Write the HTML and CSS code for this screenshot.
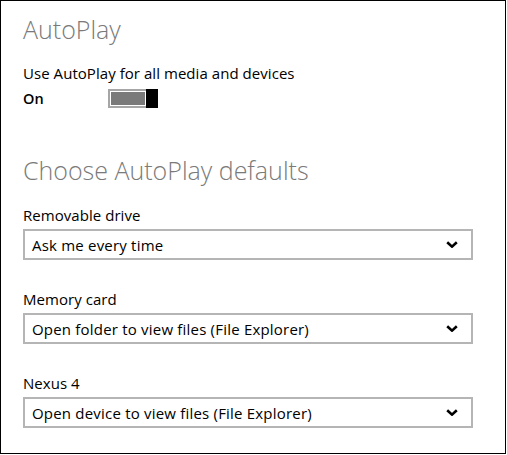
FILE: index.html
```html
<!DOCTYPE html>
<html lang="en">
<head>
<meta charset="utf-8">
<title>AutoPlay</title>
<link rel="stylesheet" href="styles.css">
</head>
<body>
<div class="frame">
  <h1 class="heading">AutoPlay</h1>
  <div class="label">Use AutoPlay for all media and devices</div>
  <div class="toggle-row">
    <span class="state">On</span>
    <span class="toggle"><span class="track"></span><span class="thumb"></span></span>
  </div>

  <h2 class="heading heading-second">Choose AutoPlay defaults</h2>

  <div class="field">
    <div class="label">Removable drive</div>
    <div class="select">
      <span class="select-text">Ask me every time</span>
      <svg class="chevron" width="12" height="7" viewBox="0 0 12 7"><polyline points="1.2,1.2 6,5.6 10.8,1.2" fill="none" stroke="#000" stroke-width="2.6"/></svg>
    </div>
  </div>

  <div class="field">
    <div class="label">Memory card</div>
    <div class="select">
      <span class="select-text">Open folder to view files (File Explorer)</span>
      <svg class="chevron" width="12" height="7" viewBox="0 0 12 7"><polyline points="1.2,1.2 6,5.6 10.8,1.2" fill="none" stroke="#000" stroke-width="2.6"/></svg>
    </div>
  </div>

  <div class="field">
    <div class="label">Nexus 4</div>
    <div class="select">
      <span class="select-text">Open device to view files (File Explorer)</span>
      <svg class="chevron" width="12" height="7" viewBox="0 0 12 7"><polyline points="1.2,1.2 6,5.6 10.8,1.2" fill="none" stroke="#000" stroke-width="2.6"/></svg>
    </div>
  </div>
</div>
</body>
</html>
```

FILE: styles.css
```css
html, body {
  margin: 0;
  padding: 0;
  background: #fff;
}

.frame {
  box-sizing: border-box;
  width: 506px;
  height: 454px;
  border: 1px solid #000;
  padding: 11px 0 0 22px;
  font-family: "Open Sans", "Liberation Sans", sans-serif;
  color: #000;
}

.heading {
  margin: 0;
  font-family: "Open Sans", "Liberation Sans", sans-serif;
  font-weight: 300;
  font-size: 25px;
  line-height: 34px;
  color: #7a7a7a;
}

.heading-second {
  margin-top: 45px;
}

.label {
  font-size: 15px;
  line-height: 20px;
  margin-top: 17px;
  letter-spacing: 0.05px;
}

.toggle-row {
  display: flex;
  align-items: center;
  height: 20px;
  margin-top: 5px;
}

.state {
  width: 85px;
  font-size: 14.5px;
  font-weight: 600;
}

.toggle {
  display: flex;
  width: 50px;
  height: 19px;
}

.track {
  flex: 1;
  border: 2px solid #a6a6a6;
  border-right: 0;
  background: #7a7a7a;
  box-shadow: inset 0 0 0 1px #fff;
}

.thumb {
  width: 12px;
  background: #000;
}

.field .label {
  margin-top: 18px;
}

.field + .field .label {
  margin-top: 29px;
}

.select {
  box-sizing: border-box;
  display: flex;
  align-items: center;
  justify-content: space-between;
  width: 450px;
  height: 31px;
  margin-top: 4px;
  padding: 0 13px 0 7px;
  border: 2px solid #b5b5b5;
  font-size: 15px;
  letter-spacing: 0.2px;
}

.chevron {
  display: block;
}
```
